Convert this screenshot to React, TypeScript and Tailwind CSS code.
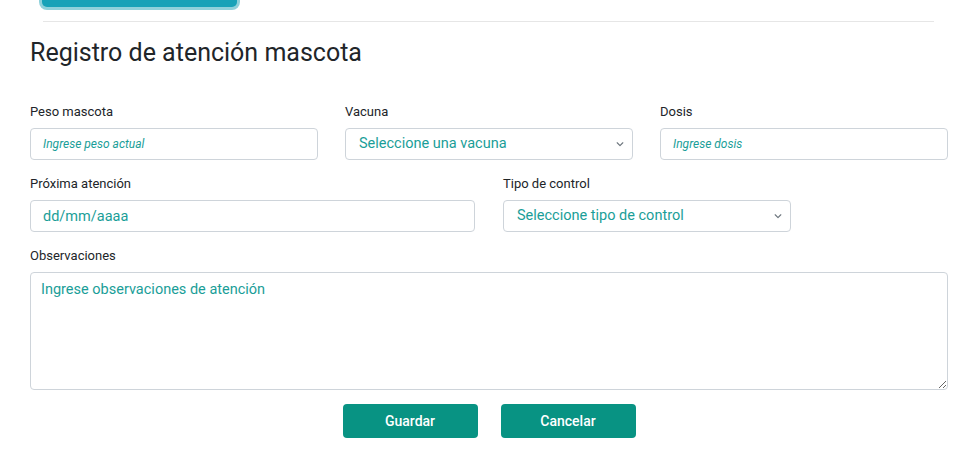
// Registro de atención: pet visit form (weight, vaccine, dose, next visit, control type, notes).
const inputClass =
  "h-8 w-full rounded border border-[#ced4da] bg-white px-3 text-[12px] text-[#1a9e98] outline-none " +
  "placeholder:text-[#1a9e98] placeholder:italic";

const selectClass =
  "h-8 w-full appearance-none rounded border border-[#ced4da] bg-white pl-[13px] pr-8 text-[14.5px] text-[#1a9e98] outline-none";

const labelClass = "mb-2 block text-[13px] leading-4 text-[#212529]";

function Chevron() {
  return (
    <svg
      className="pointer-events-none absolute right-[8px] top-1/2 -translate-y-1/2"
      width="10"
      height="10"
      viewBox="0 0 16 16"
      fill="none"
      stroke="#6c757d"
      strokeWidth="1.8"
      strokeLinecap="round"
      strokeLinejoin="round"
    >
      <path d="M3.5 6l4.5 4.5 4.5-4.5" />
    </svg>
  );
}

export default function App() {
  return (
    <div className="min-h-[450px] bg-white font-['Roboto',sans-serif] text-[#212529]">
      {/* Tail of the toolbar button cut off at the top of the page */}
      <div className="relative h-[21px]">
        <div className="absolute left-[42px] top-[-20px] h-[27px] w-[195px] rounded-[5px] bg-[#17a2b8] ring-[3px] ring-[#8fd1db]" />
      </div>
      <hr className="mx-[43px] border-t border-[#e6e6e6]" />

      <div className="pl-[30px] pr-[29px]">
        <h1 className="mt-[15px] text-[25px] leading-8 font-normal text-[#212529]">
          Registro de atención mascota
        </h1>

        <div className="mt-[35px] grid grid-cols-3 gap-x-[27px]">
          <div>
            <label className={labelClass}>Peso mascota</label>
            <input className={inputClass} placeholder="Ingrese peso actual" />
          </div>
          <div>
            <label className={labelClass}>Vacuna</label>
            <div className="relative">
              <select className={selectClass} defaultValue="">
                <option value="">Seleccione una vacuna</option>
              </select>
              <Chevron />
            </div>
          </div>
          <div>
            <label className={labelClass}>Dosis</label>
            <input className={inputClass} placeholder="Ingrese dosis" />
          </div>
        </div>

        <div className="mt-4 flex gap-x-[28px]">
          <div className="w-[445px]">
            <label className={labelClass}>Próxima atención</label>
            <input
              className={inputClass + " text-[14.5px] placeholder:not-italic"}
              placeholder="dd/mm/aaaa"
            />
          </div>
          <div className="w-[288px]">
            <label className={labelClass}>Tipo de control</label>
            <div className="relative">
              <select className={selectClass} defaultValue="">
                <option value="">Seleccione tipo de control</option>
              </select>
              <Chevron />
            </div>
          </div>
        </div>

        <div className="mt-4">
          <label className={labelClass}>Observaciones</label>
          <textarea
            className="block h-[118px] w-full rounded border border-[#ced4da] bg-white px-[10px] py-[6px] text-[14.5px] text-[#1a9e98] outline-none placeholder:text-[#1a9e98]"
            placeholder="Ingrese observaciones de atención"
          />
        </div>

        <div className="mt-[14px] flex justify-center gap-[23px]">
          <button className="h-[34px] w-[135px] rounded bg-[#089383] text-[14px] font-medium text-white">
            Guardar
          </button>
          <button className="h-[34px] w-[135px] rounded bg-[#089383] text-[14px] font-medium text-white">
            Cancelar
          </button>
        </div>
      </div>
    </div>
  );
}
